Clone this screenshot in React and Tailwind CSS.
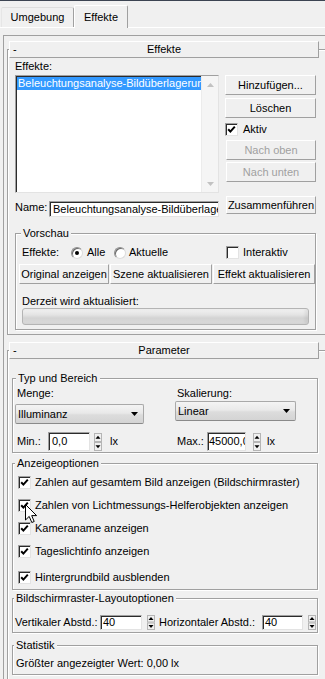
const raised =
  "border border-t-white border-l-white border-r-[#a0a0a0] border-b-[#a0a0a0] bg-[#f0f0f0]";
const sunken =
  "border border-t-[#a0a0a0] border-l-[#a0a0a0] border-r-[#e3e3e3] border-b-[#e3e3e3] bg-white shadow-[inset_1px_1px_0_#2b2b2b]";

function Btn({ children, className = "", disabled }) {
  return (
    <button
      type="button"
      className={`flex items-center justify-center whitespace-nowrap ${raised} ${
        disabled ? "text-[#a0a0a0]" : "text-black"
      } ${className}`}
    >
      {children}
    </button>
  );
}

function Check({ on }) {
  return (
    <span className={`flex h-[13px] w-[13px] shrink-0 items-center justify-center ${sunken}`}>
      {on && (
        <svg width="9" height="9" viewBox="0 0 9 9">
          <path d="M1.2 4.2 L3.4 6.6 L7.8 1.6" stroke="#000" strokeWidth="2" fill="none" />
        </svg>
      )}
    </span>
  );
}

function Radio({ on }) {
  return (
    <span className="flex h-[12px] w-[12px] shrink-0 items-center justify-center rounded-full border border-[#8f8f8f] border-r-[#dcdcdc] border-b-[#dcdcdc] bg-white shadow-[inset_1px_1px_0_#6a6a6a]">
      {on && <span className="h-[4px] w-[4px] rounded-full bg-black" />}
    </span>
  );
}

function Spin({ h = 18 }) {
  const half = (h - 1) / 2;
  return (
    <svg width="8" height={h} viewBox={`0 0 8 ${h}`} className="shrink-0">
      <rect x="0.5" y="0.5" width="7" height={half - 0.5} fill="#f0f0f0" stroke="#b5b5b5" />
      <rect x="0.5" y={half + 1} width="7" height={half - 0.5} fill="#f0f0f0" stroke="#b5b5b5" />
      <path d={`M4 ${half / 2 - 1.5} L6.5 ${half / 2 + 1.5} L1.5 ${half / 2 + 1.5} Z`} fill="#000" />
      <path d={`M1.5 ${half + 1 + half / 2 - 1.5} L6.5 ${half + 1 + half / 2 - 1.5} L4 ${half + 1 + half / 2 + 1.5} Z`} fill="#000" />
    </svg>
  );
}

function Select({ value, className = "" }) {
  return (
    <div
      className={`flex items-center justify-between rounded-[2px] border border-[#a9a9a9] border-b-[#8a8a8a] bg-[linear-gradient(to_bottom,#f4f4f4,#e9e9e9_45%,#dcdcdc_55%,#d4d4d4)] pl-[2px] pr-[5px] ${className}`}
    >
      <span>{value}</span>
      <svg width="7" height="4" viewBox="0 0 7 4">
        <path d="M0 0 H7 L3.5 4 Z" fill="#000" />
      </svg>
    </div>
  );
}

function Group({ title, className = "", legendClass = "", children }) {
  return (
    <div
      className={`border border-[#a0a0a0] shadow-[inset_1px_1px_0_#fff,1px_1px_0_#fff] ${className}`}
    >
      <div className={`-mt-[7px] h-[13px] w-fit bg-[#f0f0f0] px-[2px] ${legendClass}`}>{title}</div>
      {children}
    </div>
  );
}

function Rollout({ title, className = "", children }) {
  return (
    <div
      className={`ml-[3px] w-[322px] border border-[#a0a0a0] shadow-[inset_1px_1px_0_#fff] ${className}`}
    >
      <div className={`ml-[1px] -mt-[9px] flex h-[17px] w-[310px] items-center ${raised}`}>
        <span className="w-[22px] pl-[3px]">-</span>
        <span className="flex-1 pr-[22px] text-center">{title}</span>
      </div>
      {children}
    </div>
  );
}

function ListBox() {
  return (
    <div className={`flex h-[118px] w-[204px] ${sunken}`}>
      <div className="min-w-0 flex-1 pl-[1px] pt-[1px]">
        <div className="h-[13px] overflow-hidden whitespace-nowrap bg-[#3399ff] pl-[1px] text-white">
          Beleuchtungsanalyse-Bildüberlagerung
        </div>
      </div>
      <div className="flex w-[17px] flex-col justify-between border-l border-[#ececec] bg-[#f5f5f5]">
        <div className="flex h-[17px] items-center justify-center">
          <svg width="7" height="4" viewBox="0 0 7 4">
            <path d="M0 4 H7 L3.5 0 Z" fill="#c2c2c2" />
          </svg>
        </div>
        <div className="flex h-[17px] items-center justify-center">
          <svg width="7" height="4" viewBox="0 0 7 4">
            <path d="M0 0 H7 L3.5 4 Z" fill="#c2c2c2" />
          </svg>
        </div>
      </div>
    </div>
  );
}

function CheckRow({ label, className = "" }) {
  return (
    <div className={`flex h-[13px] items-center gap-[4px] pl-[5px] ${className}`}>
      <Check on />
      <span className="whitespace-nowrap">{label}</span>
    </div>
  );
}

export default function App() {
  return (
    <div className="relative h-[679px] w-[325px] overflow-hidden bg-[#f0f0f0] font-['Liberation_Sans',Arial,sans-serif] text-[11px] leading-[13px] text-black">
      <div className="h-px bg-[#3c4452]" />

      {/* tabs */}
      <div className="flex h-[27px] items-end border-b border-white">
        <div className="ml-[1px] flex h-[20px] w-[73px] items-center justify-center rounded-t-[2px] border border-b-0 border-t-[#dedede] border-l-[#e6e6e6] border-r-[#a0a0a0]">
          Umgebung
        </div>
        <div className="-mb-px flex h-[23px] w-[54px] items-center justify-center rounded-t-[2px] border border-b-0 border-t-white border-l-white border-r-[#a0a0a0] bg-[#f0f0f0]">
          Effekte
        </div>
      </div>

      <div className="ml-[3px] mt-[7px] h-[700px] border-l border-t border-[#a0a0a0]">
        {/* Effekte rollout */}
        <Rollout title="Effekte" className="mt-[13px] pb-[4px]">
          <div className="pl-[7px]">
            <div className="mt-[2px]">Effekte:</div>
            <div className="mt-[2px] flex items-start">
              <ListBox />
              <div className="ml-[6px] flex w-[91px] flex-col">
                <Btn className="h-[20px]">Hinzufügen...</Btn>
                <Btn className="mt-[3px] h-[20px]">Löschen</Btn>
                <div className="mt-[5px] flex h-[13px] items-center gap-[5px]">
                  <Check on />
                  <span>Aktiv</span>
                </div>
                <Btn disabled className="mt-[4px] ml-[1px] h-[20px]">
                  Nach oben
                </Btn>
                <Btn disabled className="mt-[2px] ml-[1px] h-[20px]">
                  Nach unten
                </Btn>
              </div>
            </div>

            <div className="mt-[3px] flex items-start">
              <span className="mt-[5px] w-[34px]">Name:</span>
              <div
                className={`mt-[5px] h-[16px] w-[170px] overflow-hidden whitespace-nowrap pl-[3px] pt-[1px] ${sunken}`}
              >
                Beleuchtungsanalyse-Bildüberlagerung
              </div>
              <Btn className="ml-[7px] h-[18px] w-[90px]">Zusammenführen</Btn>
            </div>

            <Group title="Vorschau" className="mt-[16px] w-[301px] pb-[4px]" legendClass="ml-[5px]">
              <div className="mt-[6px] flex h-[13px] items-center pl-[6px]">
                <span className="w-[49px]">Effekte:</span>
                <Radio on />
                <span className="ml-[4px] w-[27px]">Alle</span>
                <Radio />
                <span className="ml-[3px] w-[97px]">Aktuelle</span>
                <Check />
                <span className="ml-[4px]">Interaktiv</span>
              </div>
              <div className="mt-[5px] flex gap-[1px] pl-[3px]">
                <Btn className="h-[20px] w-[90px]">Original anzeigen</Btn>
                <Btn className="h-[20px] w-[102px]">Szene aktualisieren</Btn>
                <Btn className="h-[20px] w-[102px]">Effekt aktualisieren</Btn>
              </div>
              <div className="mt-[11px] pl-[6px]">Derzeit wird aktualisiert:</div>
              <div className="ml-[6px] h-[17px] w-[287px] rounded-[3px] border border-[#b4b4b4] bg-[linear-gradient(to_bottom,#f2f2f2,#e3e3e3_40%,#d3d3d3_60%,#dadada)] shadow-[inset_-3px_0_3px_rgba(0,0,0,0.06)]" />
            </Group>
          </div>
        </Rollout>

        {/* Parameter rollout */}
        <Rollout title="Parameter" className="mt-[15px] h-[400px]">
          <div className="pl-[4px]">
            <Group title="Typ und Bereich" className="mt-[19px] w-[306px] pb-[1px]" legendClass="ml-[3px]">
              <div className="mt-[2px] flex pl-[4px]">
                <span className="w-[160px]">Menge:</span>
                <span>Skalierung:</span>
              </div>
              <div className="mt-[1px] flex items-start pl-[2px]">
                <Select value="Illuminanz" className="mt-[3px] h-[20px] w-[129px]" />
                <Select value="Linear" className="ml-[31px] h-[20px] w-[121px]" />
              </div>
              <div className="mt-[8px] flex h-[19px] items-center pl-[4px]">
                <span className="w-[31px]">Min.:</span>
                <div className={`h-[19px] w-[42px] pl-[3px] pt-[2px] ${sunken}`}>0,0</div>
                <span className="ml-[4px]">
                  <Spin h={18} />
                </span>
                <span className="ml-[8px] w-[67px]">lx</span>
                <span className="w-[30px]">Max.:</span>
                <div className={`h-[19px] w-[39px] overflow-hidden whitespace-nowrap pl-[1px] pt-[2px] ${sunken}`}>
                  45000,0
                </div>
                <span className="ml-[7px]">
                  <Spin h={18} />
                </span>
                <span className="ml-[6px]">lx</span>
              </div>
            </Group>

            <Group title="Anzeigeoptionen" className="mt-[10px] w-[306px] pb-[5px]" legendClass="ml-[2px]">
              <CheckRow className="mt-[6px]" label="Zahlen auf gesamtem Bild anzeigen (Bildschirmraster)" />
              <CheckRow className="mt-[10px]" label="Zahlen von Lichtmessungs-Helferobjekten anzeigen" />
              <CheckRow className="mt-[10px]" label="Kameraname anzeigen" />
              <CheckRow className="mt-[10px]" label="Tageslichtinfo anzeigen" />
              <CheckRow className="mt-[13px]" label="Hintergrundbild ausblenden" />
            </Group>

            <Group
              title="Bildschirmraster-Layoutoptionen"
              className="mt-[8px] w-[306px] pb-[2px]"
              legendClass="ml-[1px]"
            >
              <div className="mt-[10px] flex h-[15px] items-center whitespace-nowrap pl-[2px]">
                <span className="w-[85px] shrink-0">Vertikaler Abstd.:</span>
                <div className={`h-[15px] w-[42px] shrink-0 pl-[2px] ${sunken}`}>40</div>
                <span className="ml-[5px]">
                  <Spin h={15} />
                </span>
                <span className="ml-[4px] w-[103px] shrink-0">Horizontaler Abstd.:</span>
                <div className={`h-[15px] w-[41px] shrink-0 pl-[2px] ${sunken}`}>40</div>
                <span className="ml-[5px]">
                  <Spin h={15} />
                </span>
              </div>
            </Group>

            <Group title="Statistik" className="mt-[12px] w-[306px] pb-[4px]" legendClass="ml-[1px]">
              <div className="mt-[5px] pl-[3px]">Größter angezeigter Wert: 0,00 lx</div>
            </Group>
          </div>
        </Rollout>
      </div>

      {/* mouse pointer */}
      <svg
        className="absolute left-[25px] top-[504px]"
        width="13"
        height="20"
        viewBox="0 0 13 20"
      >
        <path
          d="M0.5 0.5 L0.5 16 L4.2 12.4 L6.8 18.5 L9.2 17.5 L6.7 11.6 L11.6 11.6 Z"
          fill="#fff"
          stroke="#000"
          strokeWidth="1"
          strokeLinejoin="round"
        />
      </svg>
    </div>
  );
}
